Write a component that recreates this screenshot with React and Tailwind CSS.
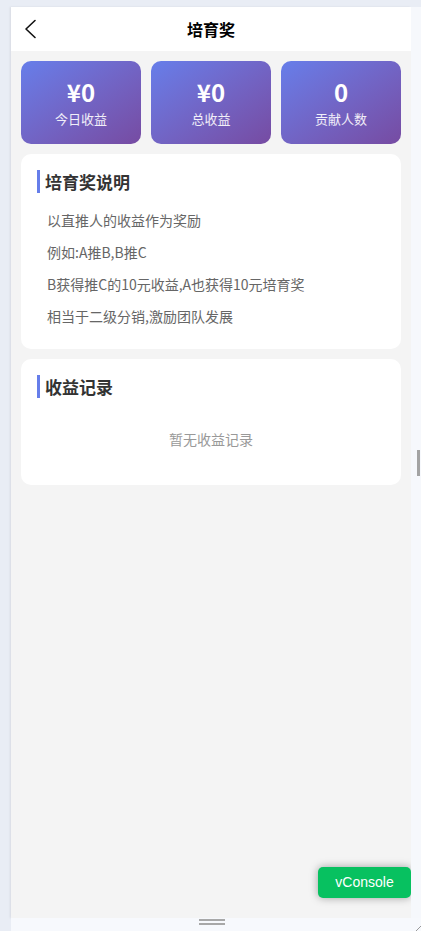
import React from "react";

const cjk = { fontFamily: '"Noto Sans CJK SC", "Noto Sans", sans-serif' };

function Stat({ value, label }) {
  return (
    <div className="flex-1 h-[83px] rounded-[10px] bg-gradient-to-br from-[#667eea] to-[#764ba2] flex flex-col items-center pt-[15px]">
      <div className="text-[24px] leading-[32px] font-bold text-white">{value}</div>
      <div className="mt-[2px] text-[13px] leading-[18px] text-white/90">{label}</div>
    </div>
  );
}

function Title({ children }) {
  return (
    <div className="flex items-stretch h-[23px]">
      <div className="w-[3px] bg-[#667eea]" />
      <div className="pl-[5px] text-[17px] leading-[23px] font-bold text-[#333]">{children}</div>
    </div>
  );
}

export default function App() {
  const lines = [
    "以直推人的收益作为奖励",
    "例如:A推B,B推C",
    "B获得推C的10元收益,A也获得10元培育奖",
    "相当于二级分销,激励团队发展",
  ];
  return (
    <div className="w-[421px] h-[931px] bg-[#e9edf5] pt-[7px] flex flex-col overflow-hidden" style={cjk}>
      <div className="flex h-[911px]">
        <div className="w-[11px]" />
        <div className="relative w-[400px] h-full bg-[#f4f4f4] shadow-[-1px_0_2px_rgba(0,0,0,0.08)] flex flex-col">
          <div className="h-[44px] bg-white flex items-center relative">
            <svg className="absolute left-[11px] top-[12px]" width="16" height="20" viewBox="0 0 16 20" fill="none">
              <path d="M13 1.5 L4 10 L13 18.5" stroke="#111" strokeWidth="1.6" strokeLinecap="round" strokeLinejoin="round" />
            </svg>
            <div className="w-full text-center text-[16px] font-bold text-black leading-[44px]">培育奖</div>
          </div>
          <div className="px-[10px] pt-[10px] flex flex-col gap-[10px]">
            <div className="flex gap-[10px]">
              <Stat value="¥0" label="今日收益" />
              <Stat value="¥0" label="总收益" />
              <Stat value="0" label="贡献人数" />
            </div>
            <div className="bg-white rounded-[10px] pt-4 pb-[17px] pl-4 pr-4">
              <Title>培育奖说明</Title>
              <div className="mt-[11px] pl-[10px]">
                {lines.map((l) => (
                  <div key={l} className="h-8 leading-8 text-[14px] text-[#666]">{l}</div>
                ))}
              </div>
            </div>
            <div className="bg-white rounded-[10px] pt-4 pl-4 pr-4 pb-[35px]">
              <Title>收益记录</Title>
              <div className="mt-[30px] h-[22px] leading-[22px] text-center text-[14px] text-[#999]">暂无收益记录</div>
            </div>
          </div>
          <div
            className="absolute right-0 top-[860px] w-[93px] h-[31px] rounded-[5px] bg-[#07c160] text-white text-[14px] flex items-center justify-center shadow-[0_0_8px_rgba(0,0,0,0.35)]"
            style={{ fontFamily: '"Liberation Sans", Arial, sans-serif' }}
          >
            vConsole
          </div>
        </div>
        <div className="relative w-[10px] h-full bg-[#f6f8fc]">
          <div className="absolute left-[6px] top-[443px] w-[3px] h-[26px] bg-[#a3a3a3]" />
        </div>
      </div>
      <div className="flex h-[13px]">
        <div className="w-[11px]" />
        <div className="flex-1 bg-[#f7f9fd] relative">
          <div className="absolute left-[188px] top-[1px] w-[26px] h-[2px] bg-[#a8a8a8]" />
          <div className="absolute left-[188px] top-[5px] w-[26px] h-[2px] bg-[#a8a8a8]" />
          <svg className="absolute right-0 bottom-0" width="5" height="5" viewBox="0 0 5 5">
            <path d="M5 0 L0 5" stroke="#999" strokeWidth="1" />
          </svg>
        </div>
      </div>
    </div>
  );
}
